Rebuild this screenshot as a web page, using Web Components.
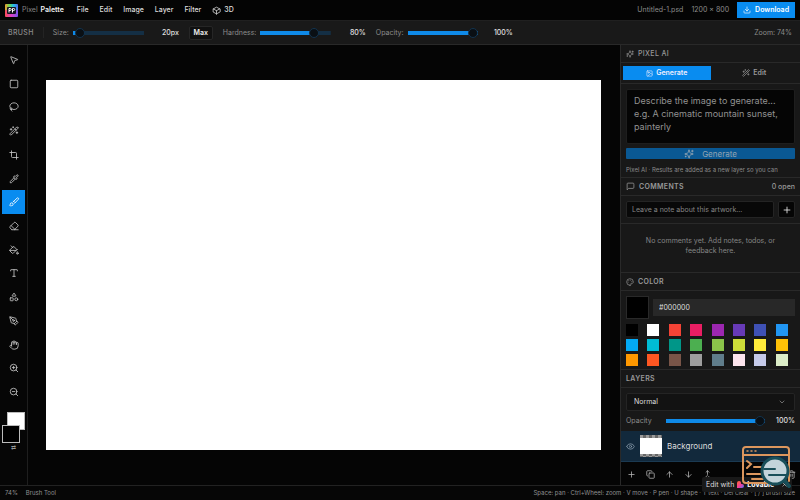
<!DOCTYPE html>
<html lang="en">
<head>
<meta charset="utf-8">
<title>Pixel Palette</title>
<style>
html,body{margin:0;height:100%;background:#050505}
body{font:400 8px/12px Inter,"Liberation Sans",sans-serif;color:#d8d8d8;overflow:hidden;
--line:#292929;--panel:#181818;--blue:#098cf0;--muted:#8c8c8c}
</style>
</head>
<body>
<pixel-app></pixel-app>
<script>
const BASE=`<style>*{box-sizing:border-box}:host{display:block}:host([hidden]){display:none}
button,input,select,textarea{font:inherit;color:inherit;margin:0;padding:0;border:0;background:none;border-radius:0;outline:0}
button{display:flex;align-items:center;justify-content:center}p,h2{margin:0;font:inherit}</style>`;
function define(tag,render){
  customElements.define(tag,class extends HTMLElement{
    connectedCallback(){
      if(this.shadowRoot)return;
      const t=document.createElement('template');
      t.innerHTML=BASE+(typeof render==='function'?render(this):render);
      this.attachShadow({mode:'open'}).append(t.content.cloneNode(true));
    }
  });
}
const ICONS={
cube:'<path d="m21 8-9-5-9 5v8l9 5 9-5z"/><path d="m3.3 7.5 8.7 5 8.7-5M12 22v-9.5"/>',
download:'<path d="M12 15V3M21 15v4a2 2 0 0 1-2 2H5a2 2 0 0 1-2-2v-4"/><path d="m7 10 5 5 5-5"/>',
move:'<path d="M4.04 4.69a.5.5 0 0 1 .65-.65l16 6.5a.5.5 0 0 1-.06.95l-6.13 1.58a2 2 0 0 0-1.43 1.43l-1.58 6.13a.5.5 0 0 1-.95.06z"/>',
square:'<rect x="3" y="3" width="18" height="18" rx="2"/>',
lasso:'<path d="M7 22a5 5 0 0 1-2-4"/><path d="M3.3 14A6.800 6.800 0 0 1 2 10c0-4.400 4.500-8 10-8s10 3.600 10 8-4.500 8-10 8a12 12 0 0 1-5-1"/><path d="M5 18a2 2 0 1 0 0-4 2 2 0 0 0 0 4z"/>',
wand:'<path d="m21.640 3.640-1.280-1.280a1.200 1.200 0 0 0-1.720 0L2.360 18.640a1.200 1.200 0 0 0 0 1.720l1.280 1.280a1.200 1.200 0 0 0 1.720 0L21.640 5.360a1.200 1.200 0 0 0 0-1.720"/><path d="m14 7 3 3M5 6v4M19 14v4M10 2v2M7 8H3M21 16h-4M11 3H9"/>',
crop:'<path d="M6 2v14a2 2 0 0 0 2 2h14"/><path d="M18 22V8a2 2 0 0 0-2-2H2"/>',
pipette:'<path d="m12 9-8.400 8.400A2 2 0 0 0 3 18.800V21h2.200a2 2 0 0 0 1.400-.6L15 12"/><path d="m18 9 .4.400a1 1 0 1 1-3 3l-3.800-3.800a1 1 0 1 1 3-3l.4.400 3.400-3.400a1 1 0 1 1 3 3z"/>',
brush:'<path d="m11 10 3 3"/><path d="M6.500 21A3.500 3.500 0 1 0 3 17.500a2.600 2.600 0 0 1-.9 1.700 1 1 0 0 0 .6 1.800z"/><path d="M9.970 11.470 19.400 2.600a2.120 2.120 0 0 1 3 3l-8.870 9.430"/>',
eraser:'<path d="m7 21-4.300-4.300c-1-1-1-2.500 0-3.400l9.600-9.600c1-1 2.500-1 3.400 0l5.600 5.600c1 1 1 2.500 0 3.400L13 21M22 21H7M5 11l9 9"/>',
bucket:'<path d="m19 11-8-8-8.600 8.600a2 2 0 0 0 0 2.800l5.200 5.200c.8.800 2 .8 2.800 0L19 11zM5 2l5 5M2 13h15M22 20a2 2 0 1 1-4 0c0-1.600 1.700-2.400 2-4 .3 1.600 2 2.400 2 4z"/>',
type:'<path d="M12 4v16M4 7V5a1 1 0 0 1 1-1h14a1 1 0 0 1 1 1v2M9 20h6"/>',
shapes:'<path d="M8.300 10a.7.700 0 0 1-.626-1.079L11.400 3a.7.700 0 0 1 1.198-.043L16.300 8.900a.7.700 0 0 1-.572 1.100z"/><rect x="3" y="14" width="7" height="7" rx="1"/><circle cx="17.500" cy="17.500" r="3.500"/>',
pen:'<path d="M15.700 21.300a1 1 0 0 1-1.400 0l-1.600-1.600a1 1 0 0 1 0-1.400l5.600-5.600a1 1 0 0 1 1.400 0l1.600 1.600a1 1 0 0 1 0 1.400z"/><path d="m18 13-1.400-6.900a1 1 0 0 0-.7-.8L3.200 2a1 1 0 0 0-1.200 1.200l3.300 12.700a1 1 0 0 0 .8.700L13 18M2.300 2.300l7.300 7.300"/><circle cx="11" cy="11" r="2"/>',
hand:'<path d="M18 11V6a2 2 0 0 0-4 0M14 10V4a2 2 0 0 0-4 0v2M10 10.500V6a2 2 0 0 0-4 0v8"/><path d="M18 8a2 2 0 1 1 4 0v6a8 8 0 0 1-8 8h-2c-2.800 0-4.500-.9-6-2.300l-3.600-3.600a2 2 0 0 1 2.800-2.800L7 15"/>',
zoomin:'<circle cx="11" cy="11" r="8"/><path d="m21 21-4.300-4.300M11 8v6M8 11h6"/>',
zoomout:'<circle cx="11" cy="11" r="8"/><path d="m21 21-4.300-4.300M8 11h6"/>',
sparkles:'<path d="M9.900 15.500A2 2 0 0 0 8.500 14.100l-6.100-1.600a.5.500 0 0 1 0-1l6.100-1.600A2 2 0 0 0 9.900 8.500l1.600-6.100a.5.500 0 0 1 1 0l1.600 6.100a2 2 0 0 0 1.400 1.400l6.100 1.600a.5.500 0 0 1 0 1l-6.100 1.600a2 2 0 0 0-1.400 1.400l-1.600 6.100a.5.500 0 0 1-1 0zM20 3v4M22 5h-4M4 17v2M5 18H3"/>',
image:'<rect x="3" y="3" width="18" height="18" rx="2"/><circle cx="9" cy="9" r="2"/><path d="m21 15-3.100-3.100a2 2 0 0 0-2.800 0L6 21"/>',
message:'<path d="M21 15a2 2 0 0 1-2 2H7l-4 4V5a2 2 0 0 1 2-2h14a2 2 0 0 1 2 2z"/>',
palette:'<path d="M12 22a10 10 0 1 1 10-10c0 3-2 4-4 4h-2a2 2 0 0 0-1.500 3.300c1 1.200.2 2.700-2.500 2.700z"/><path d="M13.500 6.500h.01M17.500 10.500h.01M6.500 12.500h.01M8.500 7.500h.01"/>',
plus:'<path d="M5 12h14M12 5v14"/>',
chevron:'<path d="m6 9 6 6 6-6"/>',
eye:'<path d="M2 12.300a1 1 0 0 1 0-.6 10.700 10.700 0 0 1 20 0 1 1 0 0 1 0 .6 10.700 10.700 0 0 1-20 0"/><circle cx="12" cy="12" r="3"/>',
copy:'<rect x="8" y="8" width="14" height="14" rx="2"/><path d="M4 16c-1.100 0-2-.9-2-2V4c0-1.100.9-2 2-2h10c1.100 0 2 .9 2 2"/>',
up:'<path d="m5 12 7-7 7 7M12 19V5"/>',
down:'<path d="M12 5v14M19 12l-7 7-7-7"/>',
merge:'<path d="m8 6 4-4 4 4M12 2v10.300a4 4 0 0 1-1.200 2.900L4 22M20 22l-5-5"/>',
trash:'<path d="M3 6h18M19 6v14a2 2 0 0 1-2 2H7a2 2 0 0 1-2-2V6M8 6V4a2 2 0 0 1 2-2h4a2 2 0 0 1 2 2v2M10 11v6M14 11v6"/>',
close:'<path d="M18 6 6 18M6 6l12 12"/>'
};
define('px-icon',el=>`<style>:host{flex:none;width:var(--size,10px);height:var(--size,10px)}svg{display:block;width:100%;height:100%;overflow:visible;fill:none;stroke:currentColor;stroke-width:2;stroke-linecap:round;stroke-linejoin:round}</style><svg viewBox="0 0 24 24" aria-hidden="true">${ICONS[el.getAttribute('name')]}</svg>`);

define('range-field',el=>{const v=+el.getAttribute('value'),m=+(el.getAttribute('max')||100);return `<style>
:host{display:flex;align-items:center}label{color:var(--muted);white-space:nowrap}
input{-webkit-appearance:none;appearance:none;flex:1;min-width:0;height:10px;margin-left:var(--gap,4px);background:linear-gradient(90deg,#0f8ae8 ${v/m*100}%,#142f45 0) center/100% 4px no-repeat}
input::-webkit-slider-thumb{-webkit-appearance:none;width:10px;height:10px;border-radius:50%;background:#0a0f14;border:1px solid #12334e}
output{width:var(--out,35px);text-align:right;color:#e0e0e0;font-weight:500}</style>
<label for="r">${el.getAttribute('label')}</label><input id="r" type="range" max="${m}" value="${v}"><output for="r">${el.getAttribute('text')}</output>`});

define('menu-bar',`<style>
:host{display:flex;align-items:center;height:20px;padding:0 5px;background:#040404;white-space:nowrap;font-size:7px}
.logo{width:13px;height:13px;flex:none}.brand{margin-left:4px;color:#858585}.brand b{font-weight:600;color:#f0f0f0;margin-left:1px}
nav{display:flex;gap:11px;margin-left:13px}nav button{font-weight:500;color:#dedede;gap:3px}
.file{margin-left:auto;display:flex;gap:8px;color:var(--muted)}
.dl{margin-left:8px;background:var(--blue);height:16px;padding:0 6px;color:#fff;font-weight:600;gap:4px}</style>
<svg class="logo" viewBox="0 0 13 13" aria-hidden="true"><defs><linearGradient id="a"><stop stop-color="#f09c2c"/><stop offset=".35" stop-color="#65d85b"/><stop offset=".65" stop-color="#22bde8"/><stop offset="1" stop-color="#536bec"/></linearGradient><linearGradient id="b"><stop stop-color="#ff4e56"/><stop offset=".5" stop-color="#dc40c8"/><stop offset="1" stop-color="#7657ee"/></linearGradient></defs><rect width="13" height="7" rx="1" fill="url(#a)"/><rect y="6" width="13" height="7" rx="1" fill="url(#b)"/><rect x="2" y="3" width="9" height="7" rx="1" fill="#141320"/><path d="M4 8.500V4.500h1.200a1 1 0 0 1 0 2H4M7.500 8.500V4.500h1.200a1 1 0 0 1 0 2H7.500" fill="none" stroke="#fff" stroke-width="1"/></svg>
<span class="brand">Pixel <b>Palette</b></span>
<nav><button>File</button><button>Edit</button><button>Image</button><button>Layer</button><button>Filter</button><button><px-icon name="cube" style="--size:9px"></px-icon>3D</button></nav>
<div class="file"><span>Untitled-1.psd</span><span>1200 × 800</span></div>
<button class="dl"><px-icon name="download" style="--size:8px"></px-icon>Download</button>`);

define('options-bar',`<style>
:host{display:flex;align-items:center;height:25px;padding:0 8px;background:#191919;border-bottom:1px solid var(--line);border-top:1px solid #202020;font-size:7px;white-space:nowrap}
.name{color:var(--muted);font-weight:500;letter-spacing:.05em}.sep{width:1px;height:11px;background:#242424;margin:0 9px}
.max{height:14px;width:24px;margin:0 10px;background:#101010;border:1px solid #262626;border-radius:2px;color:#eee;font-weight:600}
range-field{width:126px}.hard{width:143px}.op{width:137px;margin-left:10px}.zoom{margin-left:auto;color:var(--muted)}</style>
<span class="name">BRUSH</span><span class="sep"></span>
<range-field label="Size:" value="20" max="500" text="20px"></range-field><button class="max">Max</button>
<range-field class="hard" label="Hardness:" value="80" text="80%"></range-field>
<range-field class="op" label="Opacity:" value="100" text="100%"></range-field>
<span class="zoom">Zoom: 74%</span>`);

const TOOLS=[['move','Move'],['square','Marquee'],['lasso','Lasso'],['wand','Magic wand'],['crop','Crop'],['pipette','Eyedropper'],['brush','Brush'],['eraser','Eraser'],['bucket','Fill'],['type','Text'],['shapes','Shape'],['pen','Pen'],['hand','Hand'],['zoomin','Zoom in'],['zoomout','Zoom out']];
define('tool-rail',`<style>
:host{width:28px;flex:none;padding:3px 2px;background:#060606;border-right:1px solid #1e1e1e}
.tools{display:grid;grid-auto-rows:1fr;height:356px}.tools button{color:#c8c8c8}.tools .on{background:var(--blue);color:#fff}
.colors{display:grid;grid-template:6px 7px 12px 6px/5px 12px 6px;height:31px;margin-top:8px}
.colors button{border:1px solid #bbb;width:18px;height:18px}.bg{grid-area:1/2/4/4;background:#fff}.fg{grid-area:3/1/5/3;background:#000;z-index:1}
.swap{width:100%;margin-top:1px;font-size:6px;line-height:8px;color:#999}</style>
<div class="tools">${TOOLS.map(t=>`<button aria-label="${t[1]}"${t[0]=='brush'?' class="on"':''}><px-icon name="${t[0]}"></px-icon></button>`).join('')}</div>
<div class="colors"><button class="bg" aria-label="Background colour"></button><button class="fg" aria-label="Foreground colour"></button></div><button class="swap" aria-label="Swap colours">⇄</button>`);

define('canvas-stage',`<style>:host{flex:1;min-width:0;display:grid;align-items:center;padding:0 19px 0 18px;background:#050505}
.art{aspect-ratio:3/2;background:#fff}</style><div class="art"></div>`);

define('panel-section',el=>`<style>:host{border-bottom:1px solid var(--line)}
header{display:flex;align-items:center;gap:4px;height:18px;padding:0 5px;border-bottom:1px solid var(--line);background:var(--panel);font-size:7px;color:#999}
h2{font-weight:600;letter-spacing:.05em}:host([light]) h2{font-weight:500}.end{margin-left:auto;font-weight:500}</style>
<header><slot name="icon"></slot><h2>${el.getAttribute('heading')}</h2><span class="end"><slot name="end"></slot></span></header><slot></slot>`);

define('ai-panel',`<style>
.tabs{display:grid;grid-template-columns:1fr 1fr;height:21px;padding:3px 2px;border-bottom:1px solid var(--line);font-size:7px;font-weight:600}
.tabs button{gap:3px;color:#999}.tabs .on{background:var(--blue);color:#eef}
.body{padding:5px 5px 0;height:93px;overflow:hidden}
textarea{display:block;width:100%;height:55px;padding:4px 7px;background:#050505;border:1px solid #1e1e1e;border-radius:2px;resize:none;font-size:9px;line-height:13px}
textarea::placeholder{color:#929292}
.go{width:100%;height:11px;margin-top:4px;background:#0a5893;border-radius:1px;color:#92a4b2;gap:8px;font-size:8px}
p{font-size:6px;line-height:11px;color:var(--muted);white-space:nowrap;margin-top:5px}</style>
<panel-section heading="PIXEL AI" light><px-icon slot="icon" name="sparkles" style="--size:8px"></px-icon>
<div class="tabs"><button class="on"><px-icon name="image" style="--size:7px"></px-icon>Generate</button><button><px-icon name="wand" style="--size:8px"></px-icon>Edit</button></div>
<div class="body"><textarea aria-label="Prompt" placeholder="Describe the image to generate... e.g. A cinematic mountain sunset, painterly"></textarea>
<button class="go"><px-icon name="sparkles"></px-icon>Generate</button><p>Pixel AI · Results are added as a new layer so you can</p></div></panel-section>`);

define('comments-panel',`<style>
form{display:flex;gap:4px;padding:5px;height:28px;border-bottom:1px solid var(--line)}
input{flex:1;min-width:0;height:17px;padding:0 5px;background:#080808;border:1px solid #242424;border-radius:2px;font-size:7px}
input::placeholder{color:#858585}form button{width:17px;height:17px;background:#050505;border:1px solid #242424;border-radius:2px;color:#eee}
p{height:48px;padding:12px 20px 0;font-size:7px;line-height:10px;text-align:center;color:#858585}</style>
<panel-section heading="COMMENTS"><px-icon slot="icon" name="message" style="--size:9px"></px-icon><span slot="end">0 open</span>
<form><input aria-label="Note" placeholder="Leave a note about this artwork..."><button type="button" aria-label="Add note"><px-icon name="plus"></px-icon></button></form>
<p>No comments yet. Add notes, todos, or feedback here.</p></panel-section>`);

const COLORS='000000 ffffff f44336 e91e63 9c27b0 673ab7 3f51b5 2196f3 03a9f4 00bcd4 009688 4caf50 8bc34a cddc39 ffeb3b ffc107 ff9800 ff5722 795548 9e9e9e 607d8b fce4ec c5cae9 dcedc8'.split(' ');
define('color-panel',`<style>
.pick{display:flex;align-items:center;gap:4px;padding:5px 5px 0}.now{width:23px;height:23px;background:#000;border:1px solid #292929}
input{flex:1;min-width:0;height:17px;padding:0 6px;background:#282828;font-size:7px;color:#ddd}
.grid{display:grid;grid-template-columns:repeat(8,1fr);gap:3px 2px;padding:5px 5px 3px}.grid button{width:12px;height:12px}</style>
<panel-section heading="COLOR"><px-icon slot="icon" name="palette" style="--size:8px"></px-icon>
<div class="pick"><button class="now" aria-label="Current colour"></button><input aria-label="Hex colour" value="#000000"></div>
<div class="grid">${COLORS.map(c=>`<button aria-label="#${c}" style="background:#${c}"></button>`).join('')}</div></panel-section>`);

define('layers-panel',`<style>
:host{background:#050505;flex:1}panel-section{border:0}.set{background:var(--panel);padding:5px 5px 4px}
.sel{display:grid;align-items:center}.sel>*{grid-area:1/1}.sel px-icon{justify-self:end;margin-right:9px;color:#999;pointer-events:none}
select{-webkit-appearance:none;appearance:none;width:100%;height:18px;padding:0 7px;background:#121212;border:1px solid #242424;border-radius:2px;font-size:7px;color:#ddd}
range-field{height:12px;margin-top:4px;font-size:7px;--gap:14px;--out:30px}
.layer{display:flex;align-items:center;height:31px;padding:0 5px;background:#12293c;border-bottom:1px solid #1b3a52;color:#ddd}
.layer px-icon{color:#8a9cac}.thumb{width:22px;height:22px;margin:0 5px;background:linear-gradient(transparent 3px,#fff 3px 19px,transparent 19px),repeating-conic-gradient(#666 0 25%,#999 0 50%) 0 0/6px 6px}
.acts{display:flex;height:24px;align-items:center;padding:0 1px;color:#bbb}.acts button{width:19px;height:19px}.acts>:last-child{margin-left:auto;width:15px}</style>
<panel-section heading="LAYERS"><div class="set"><div class="sel"><select aria-label="Blend mode"><option>Normal</option></select><px-icon name="chevron" style="--size:8px"></px-icon></div>
<range-field label="Opacity" value="100" text="100%"></range-field></div>
<div class="layer"><px-icon name="eye" style="--size:9px"></px-icon><span class="thumb"></span>Background</div>
<div class="acts">${[['plus','Add layer'],['copy','Duplicate'],['up','Move up'],['down','Move down'],['merge','Merge'],['trash','Delete']].map(a=>`<button aria-label="${a[1]}"><px-icon name="${a[0]}" style="--size:9px"></px-icon></button>`).join('')}</div></panel-section>`);

define('side-panel',`<style>:host{display:flex;flex-direction:column;width:180px;flex:none;overflow:hidden;background:var(--panel);border-left:1px solid var(--line)}</style>
<ai-panel></ai-panel><comments-panel></comments-panel><color-panel></color-panel><layers-panel></layers-panel>`);

define('status-bar',`<style>:host{display:flex;align-items:center;gap:8px;height:15px;padding:0 5px;background:#060606;border-top:1px solid #222;font-size:6px;color:#909090;white-space:nowrap}.keys{margin-left:auto}</style>
<span>74%</span><span>Brush Tool</span><span class="keys">Space: pan · Ctrl+Wheel: zoom · V move · P pen · U shape · T text · Del clear · [ / ] brush size</span>`);

define('edit-badge',`<style>:host{position:absolute;right:8px;bottom:8px;display:flex;align-items:center;height:15px;width:90px;padding:0 4px;background:#191919;border-radius:2px;font-size:7px;white-space:nowrap;color:#ddd}
a{display:flex;align-items:center;gap:3px;color:inherit;text-decoration:none}b{font-weight:700;color:#fff}svg{width:7px;height:7px}button{margin-left:auto}</style>
<a href="#">Edit with <svg viewBox="0 0 24 24" aria-hidden="true"><defs><linearGradient id="h" x2="1" y2="1"><stop stop-color="#ff6a2a"/><stop offset=".55" stop-color="#f33e9c"/><stop offset="1" stop-color="#4a73ff"/></linearGradient></defs><path d="M7 0a7 7 0 0 1 7 7v3h3a7 7 0 0 1 0 14H0V7a7 7 0 0 1 7-7z" fill="url(#h)"/></svg><b>Lovable</b></a><button aria-label="Close"><px-icon name="close" style="--size:7px"></px-icon></button>`);

define('inspect-mark',`<style>:host{position:absolute;right:8px;bottom:10px;width:52px;height:46px;pointer-events:none}svg{display:block;width:100%;height:100%;overflow:visible}</style>
<svg viewBox="0 0 52 46" fill="none" aria-hidden="true"><g stroke="#dc965d" stroke-width="2" stroke-linecap="round"><path d="M29 39H6a3 3 0 0 1-3-3V6a3 3 0 0 1 3-3h40a3 3 0 0 1 3 3v31"/><path d="M3 11h46M7 17l4 3-4 4M14 23h9M7 30h14M12 35h12"/><path d="M7 7h1M11 7h1M15 7h1" stroke-width="1.500"/></g><path d="m44 36 5 6" stroke="#194f59" stroke-width="4" stroke-linecap="round"/><circle cx="35" cy="27" r="13" fill="#c3d4da" stroke="#194f59" stroke-width="3"/><path d="M24 25h11M29 31h17" stroke="#194f59" stroke-width="2" stroke-linecap="round"/></svg>`);

define('pixel-app',`<style>:host{display:flex;flex-direction:column;height:100vh;position:relative}main{display:flex;flex:1;min-height:0}</style>
<menu-bar></menu-bar><options-bar></options-bar><main><tool-rail></tool-rail><canvas-stage></canvas-stage><side-panel></side-panel></main><status-bar></status-bar><edit-badge></edit-badge><inspect-mark></inspect-mark>`);
</script>
</body>
</html>
